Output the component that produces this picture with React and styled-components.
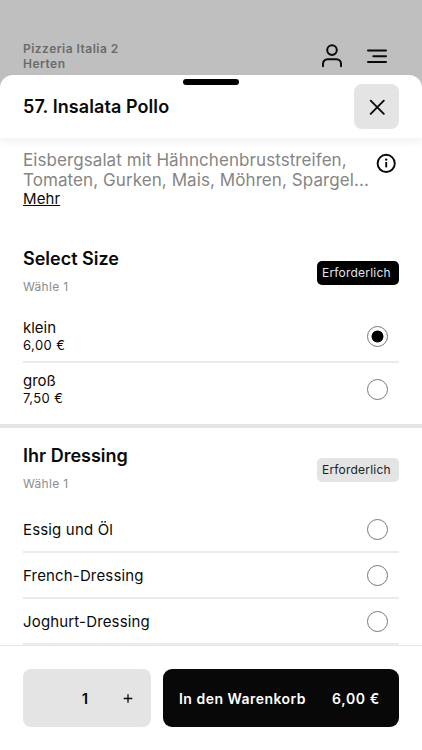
import React, { useState } from 'react';
import styled, { createGlobalStyle } from 'styled-components';

const sizes = [
  { name: 'klein', price: '6,00 €' },
  { name: 'groß', price: '7,50 €' }
];

const dressings = ['Essig und Öl', 'French-Dressing', 'Joghurt-Dressing'];

const App = () => {
  const [size, setSize] = useState('klein');
  const [dressing, setDressing] = useState(null);
  const [quantity, setQuantity] = useState(1);

  const price = sizes.find((item) => item.name === size).price;

  return (
    <Page>
      <GlobalStyle />
      <TopBar>
        <Restaurant>
          Pizzeria Italia 2<br />
          Herten
        </Restaurant>
        <TopIcons>
          <svg width="22" height="25" viewBox="0 0 22 25" fill="none" stroke="#0a0a0a" strokeWidth="2" strokeLinecap="round">
            <circle cx="11" cy="7.1" r="4.8" />
            <path d="M2 23.2V20.8A4.6 4.6 0 0 1 6.6 16.2H15.4A4.6 4.6 0 0 1 20 20.8V23.2" />
          </svg>
          <svg width="20" height="16" viewBox="0 0 20 16" fill="none" stroke="#0a0a0a" strokeWidth="2" strokeLinecap="round">
            <path d="M1 2.6H19M6.3 8.2H19M1 14H19" />
          </svg>
        </TopIcons>
      </TopBar>

      <Sheet>
        <Header>
          <Handle />
          <Title>57. Insalata Pollo</Title>
          <CloseButton aria-label="Schließen">
            <svg width="16" height="16" viewBox="0 0 16 16" fill="none" stroke="#0a0a0a" strokeWidth="1.9" strokeLinecap="round">
              <path d="M1.7 1.7L14.8 14.8M14.8 1.7L1.7 14.8" />
            </svg>
          </CloseButton>
        </Header>

        <Content>
          <Intro>
            <Description>
              Eisbergsalat mit Hähnchenbruststreifen,<br />
              Tomaten, Gurken, Mais, Möhren, Spargel...
              <More>Mehr</More>
            </Description>
            <svg width="20" height="20" viewBox="0 0 20 20" fill="none" stroke="#0a0a0a" strokeWidth="1.9">
              <circle cx="10.2" cy="10.4" r="8.6" />
              <path d="M10.2 9V14.4" />
              <circle cx="10.2" cy="6.6" r="1.2" fill="#0a0a0a" stroke="none" />
            </svg>
          </Intro>

          <SectionHead>
            <div>
              <SectionTitle>Select Size</SectionTitle>
              <Hint>Wähle 1</Hint>
            </div>
            <Badge $dark>Erforderlich</Badge>
          </SectionHead>
          {sizes.map((item, index) => (
            <SizeRow
              key={item.name}
              $last={index === sizes.length - 1}
              onClick={() => setSize(item.name)}
            >
              <div>
                <SizeName>{item.name}</SizeName>
                <SizePrice>{item.price}</SizePrice>
              </div>
              <Radio $checked={size === item.name} />
            </SizeRow>
          ))}

          <Divider />

          <SectionHead $spaced>
            <div>
              <SectionTitle>Ihr Dressing</SectionTitle>
              <Hint>Wähle 1</Hint>
            </div>
            <Badge>Erforderlich</Badge>
          </SectionHead>
          {dressings.map((item) => (
            <DressingRow key={item} onClick={() => setDressing(item)}>
              {item}
              <Radio $checked={dressing === item} />
            </DressingRow>
          ))}
        </Content>

        <Footer>
          <Stepper>
            <Quantity>{quantity}</Quantity>
            <Plus aria-label="Mehr" onClick={() => setQuantity(quantity + 1)}>
              <svg width="10" height="10" viewBox="0 0 10 10" stroke="#0a0a0a" strokeWidth="1.3">
                <path d="M0.7 5.5H9.3M5 1.2V9.8" />
              </svg>
            </Plus>
          </Stepper>
          <CartButton>
            <span>In den Warenkorb</span>
            <CartPrice>{price}</CartPrice>
          </CartButton>
        </Footer>
      </Sheet>
    </Page>
  );
};

const GlobalStyle = createGlobalStyle`
  * {
    box-sizing: border-box;
  }

  body {
    margin: 0;
    font-family: Inter, "Liberation Sans", sans-serif;
    color: #0a0a0a;
  }

  button {
    padding: 0;
    border: none;
    font-family: inherit;
    color: inherit;
    cursor: pointer;
  }

  svg {
    display: block;
    flex-shrink: 0;
  }
`;

const Page = styled.div`
  display: flex;
  flex-direction: column;
  height: 750px;
  overflow: hidden;
  background: #bfbfbf;
  white-space: nowrap;
`;

const TopBar = styled.header`
  display: flex;
  justify-content: space-between;
  height: 75px;
  padding: 41px 35px 0 23px;
`;

const Restaurant = styled.div`
  font-size: 12px;
  font-weight: 600;
  line-height: 15px;
  letter-spacing: 0.48px;
  color: #6b6b6b;
`;

const TopIcons = styled.div`
  display: flex;
  align-items: center;
  gap: 24px;
  height: 29px;
`;

const Sheet = styled.main`
  display: flex;
  flex: 1;
  flex-direction: column;
  min-height: 0;
  border-radius: 13px 13px 0 0;
  background: #fff;
`;

const Header = styled.div`
  position: relative;
  display: flex;
  flex-shrink: 0;
  align-items: center;
  justify-content: space-between;
  height: 63px;
  padding: 0 23px;
  box-shadow: 0 4px 8px rgba(0, 0, 0, 0.06);
`;

const Handle = styled.div`
  position: absolute;
  top: 4px;
  left: 183px;
  width: 56px;
  height: 6px;
  border-radius: 3px;
  background: #000;
`;

const Title = styled.h1`
  margin: 0;
  font-size: 18px;
  font-weight: 600;
  letter-spacing: 0.08px;
`;

const CloseButton = styled.button`
  display: flex;
  align-items: center;
  justify-content: center;
  width: 45px;
  height: 45px;
  border-radius: 8px;
  background: #e4e4e4;
`;

const Content = styled.div`
  flex: 1;
  min-height: 0;
  overflow: hidden;
`;

const Intro = styled.div`
  display: flex;
  justify-content: space-between;
  height: 95px;
  padding: 12px 26px 0 23px;

  svg {
    margin-top: 3px;
  }
`;

const Description = styled.div`
  font-size: 17px;
  line-height: 20px;
  letter-spacing: 0.08px;
  color: #858585;
`;

const More = styled.div`
  font-size: 15px;
  line-height: 18px;
  color: #0a0a0a;
  text-decoration: underline;
`;

const SectionHead = styled.div`
  display: flex;
  align-items: flex-start;
  justify-content: space-between;
  height: ${({ $spaced }) => ($spaced ? '79px' : '77px')};
  padding: ${({ $spaced }) => ($spaced ? '17px' : '15px')} 23px 0;
`;

const SectionTitle = styled.h2`
  margin: 0;
  font-size: 18px;
  font-weight: 600;
  line-height: 22px;
`;

const Hint = styled.div`
  margin-top: 9px;
  font-size: 12px;
  line-height: 15px;
  letter-spacing: 0.3px;
  color: #8c8c8c;
`;

const Badge = styled.div`
  width: 82px;
  height: 24px;
  margin-top: 13px;
  padding-left: 5px;
  border-radius: 5px;
  background: ${({ $dark }) => ($dark ? '#000' : '#e4e4e4')};
  color: ${({ $dark }) => ($dark ? '#e4e4e4' : '#222')};
  font-size: 12px;
  line-height: 24px;
  letter-spacing: 0.2px;
`;

const Row = styled.div`
  display: flex;
  align-items: center;
  justify-content: space-between;
  margin: 0 23px;
  padding-right: 11px;
  border-bottom: 2px solid #ebebeb;
  font-size: 15px;
`;

const SizeRow = styled(Row)`
  height: ${({ $last }) => ($last ? '61px' : '53px')};
  padding-top: ${({ $last }) => ($last ? '0' : '1px')};
  padding-bottom: ${({ $last }) => ($last ? '8px' : '0')};
  border-bottom-width: ${({ $last }) => ($last ? '0' : '2px')};
`;

const DressingRow = styled(Row)`
  height: 46px;
  letter-spacing: 0.16px;
`;

const SizeName = styled.div`
  line-height: 18px;
`;

const SizePrice = styled.div`
  font-size: 13px;
  line-height: 17px;
  letter-spacing: 0.45px;
`;

const Radio = styled.div`
  width: 21px;
  height: 21px;
  border: 1px solid #777;
  border-radius: 50%;
  background: ${({ $checked }) =>
    $checked ? 'radial-gradient(circle, #000 5.6px, #fff 6.3px)' : '#fff'};
`;

const Divider = styled.div`
  height: 4px;
  background: #e4e4e4;
`;

const Footer = styled.footer`
  display: flex;
  flex-shrink: 0;
  gap: 12px;
  height: 105px;
  padding: 23px 23px 0;
  border-top: 1px solid #e6e6e6;
`;

const Stepper = styled.div`
  display: flex;
  align-items: center;
  justify-content: flex-end;
  width: 128px;
  height: 58px;
  padding-right: 18px;
  border-radius: 8px;
  background: #e4e4e4;
`;

const Quantity = styled.span`
  margin-right: 35px;
  font-size: 15px;
  font-weight: 600;
`;

const Plus = styled.button`
  background: none;
`;

const CartButton = styled.button`
  display: flex;
  flex: 1;
  align-items: center;
  justify-content: space-between;
  height: 58px;
  padding: 0 19px 0 16px;
  border-radius: 9px;
  background: #080808;
  color: #fff;
  font-size: 14px;
  font-weight: 600;
  letter-spacing: 0.48px;
`;

const CartPrice = styled.span`
  letter-spacing: 0.65px;
`;

export default App;
